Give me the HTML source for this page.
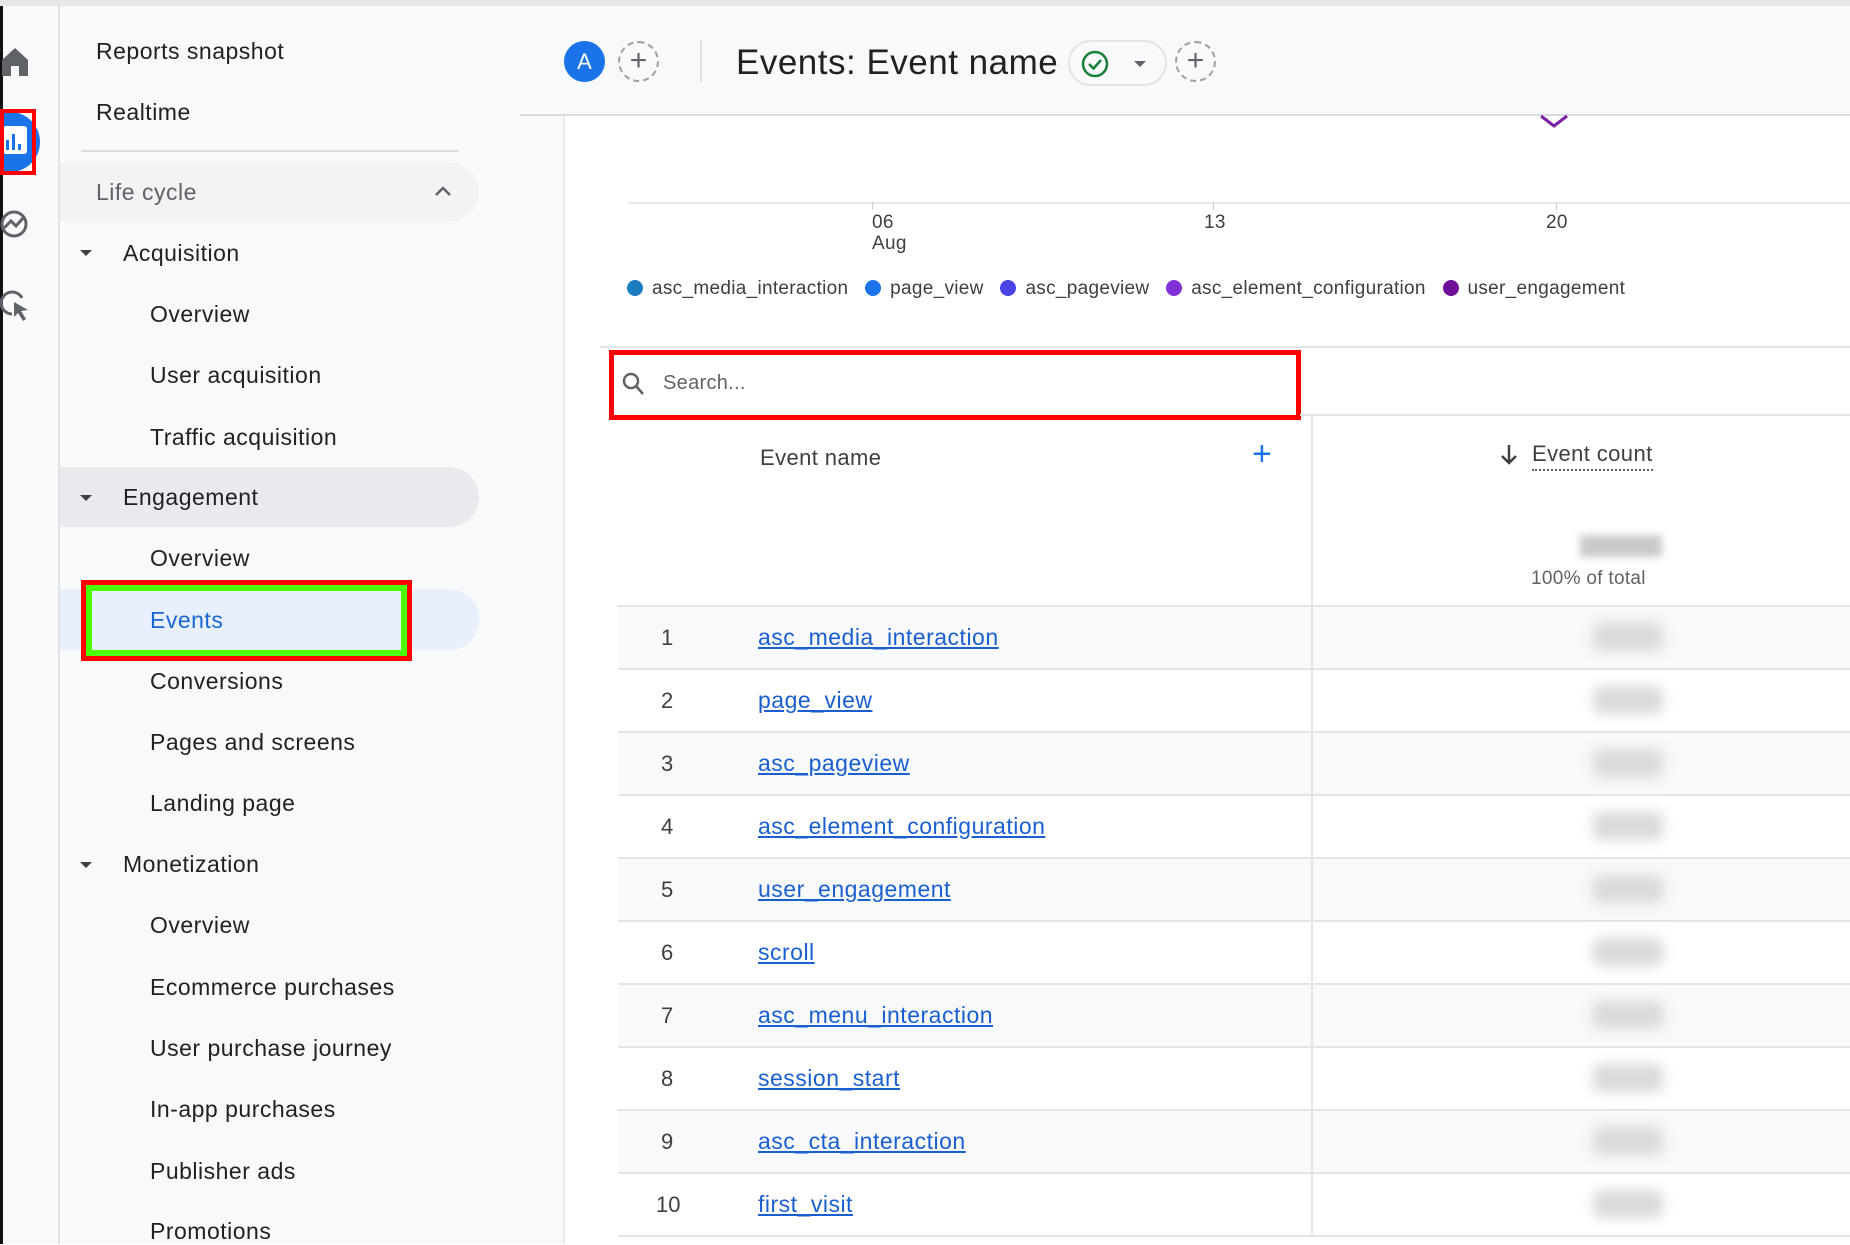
<!DOCTYPE html><html><head><style>
*{margin:0;padding:0;box-sizing:border-box}
body{width:1850px;height:1244px;overflow:hidden;background:#fff;font-family:"Liberation Sans",sans-serif;position:relative;color:#202124}
.a{position:absolute;white-space:nowrap}
.side{position:absolute;left:0;top:0;width:565px;height:1244px;background:#f8f9fa}
.nav{font-size:23px;color:#202124;line-height:28px;letter-spacing:0.5px}
.tri{position:absolute;width:0;height:0;border-left:6px solid transparent;border-right:6px solid transparent;border-top:6px solid #3c4043}
.row{position:absolute;left:618px;width:1232px;height:63px;border-bottom:2px solid #e3e4e6}
.num{position:absolute;left:43px;top:18px;font-size:22px;color:#3c4043}
.lnk{position:absolute;left:140px;top:17px;font-size:23px;color:#1a5fd0;text-decoration:underline;letter-spacing:0.5px}
.blur{position:absolute;left:975px;top:16px;width:70px;height:28px;background:#d9dadc;filter:blur(6px);border-radius:6px}
.leg{font-size:19px;color:#3c4043;letter-spacing:0.3px}
.dot{display:inline-block;width:16px;height:16px;border-radius:50%;vertical-align:-2px;margin-right:9px}
</style></head><body>
<div class="a" style="left:0;top:0;width:3px;height:1244px;background:#111"></div>
<div class="a" style="left:3px;top:0;width:57px;height:1244px;background:#f8f9fa;border-right:2px solid #e1e3e6"></div>
<div class="side" style="left:60px;width:505px;border-right:2px solid #e8eaed"></div>
<div class="a" style="left:0;top:0;width:1850px;height:6px;background:#e6e7e9"></div>
<svg class="a" style="left:0;top:44px" width="30" height="34" viewBox="0 0 30 34"><path d="M2 16 L15 4 L28 16 V32 H19 V22 H11 V32 H2 Z" fill="#5f6368"/></svg>
<div class="a" style="left:0;top:112px;width:40px;height:60px;background:#1a73e8;border-radius:0 30px 30px 0"></div>
<div class="a" style="left:3px;top:126px;width:24px;height:28px;background:#fff;border-radius:3px"></div>
<div class="a" style="left:6px;top:140px;width:3px;height:10px;background:#1a73e8"></div>
<div class="a" style="left:12px;top:134px;width:3px;height:16px;background:#1a73e8"></div>
<div class="a" style="left:18px;top:144px;width:3px;height:6px;background:#1a73e8"></div>
<div class="a" style="left:0;top:109px;width:36px;height:66px;border:4px solid #f00"></div>
<svg class="a" style="left:0;top:206px" width="32" height="36" viewBox="0 0 32 36"><circle cx="14" cy="18" r="12" fill="none" stroke="#5f6368" stroke-width="3"/><path d="M4 22 L11 15 L16 20 L24 11" fill="none" stroke="#5f6368" stroke-width="3"/></svg>
<svg class="a" style="left:0;top:288px" width="32" height="36" viewBox="0 0 32 36"><path d="M22 10 A11 11 0 1 0 12 26" fill="none" stroke="#5f6368" stroke-width="3"/><path d="M14 14 L28 22 L21 23 L26 31 L23 33 L18 25 L14 29 Z" fill="#5f6368"/></svg>
<div class="a nav" style="left:96px;top:37px">Reports snapshot</div>
<div class="a nav" style="left:96px;top:98px">Realtime</div>
<div class="a" style="left:81px;top:150px;width:378px;height:2px;background:#dadce0"></div>
<div class="a" style="left:60px;top:163px;width:419px;height:58px;background:#f1f3f4;border-radius:0 29px 29px 0"></div>
<div class="a nav" style="left:96px;top:178px;color:#5f6368">Life cycle</div>
<svg class="a" style="left:433px;top:184px" width="20" height="14"><path d="M3 11 L10 4 L17 11" fill="none" stroke="#5f6368" stroke-width="2.5"/></svg>
<div class="tri" style="left:80px;top:250px"></div><div class="a nav" style="left:123px;top:239px">Acquisition</div>
<div class="a nav" style="left:150px;top:300px">Overview</div>
<div class="a nav" style="left:150px;top:361px">User acquisition</div>
<div class="a nav" style="left:150px;top:423px">Traffic acquisition</div>
<div class="a" style="left:60px;top:467px;width:419px;height:60px;background:#e8eaed;border-radius:0 30px 30px 0"></div>
<div class="tri" style="left:80px;top:495px"></div><div class="a nav" style="left:123px;top:483px">Engagement</div>
<div class="a nav" style="left:150px;top:544px">Overview</div>
<div class="a" style="left:60px;top:589px;width:419px;height:61px;background:#e8f0fe;border-radius:0 30px 30px 0"></div>
<div class="a" style="left:81px;top:580px;width:331px;height:81px;border:5px solid #f00"></div>
<div class="a" style="left:86px;top:585px;width:321px;height:71px;border:6px solid #4cff00"></div>
<div class="a nav" style="left:150px;top:606px;color:#1967d2">Events</div>
<div class="a nav" style="left:150px;top:667px">Conversions</div>
<div class="a nav" style="left:150px;top:728px">Pages and screens</div>
<div class="a nav" style="left:150px;top:789px">Landing page</div>
<div class="tri" style="left:80px;top:862px"></div><div class="a nav" style="left:123px;top:850px">Monetization</div>
<div class="a nav" style="left:150px;top:911px">Overview</div>
<div class="a nav" style="left:150px;top:973px">Ecommerce purchases</div>
<div class="a nav" style="left:150px;top:1034px">User purchase journey</div>
<div class="a nav" style="left:150px;top:1095px">In-app purchases</div>
<div class="a nav" style="left:150px;top:1157px">Publisher ads</div>
<div class="a nav" style="left:150px;top:1217px">Promotions</div>
<div class="a" style="left:520px;top:6px;width:1330px;height:110px;background:#f8f9fa;border-bottom:2px solid #dadce0"></div>
<div class="a" style="left:564px;top:41px;width:41px;height:41px;border-radius:50%;background:#1a73e8;color:#fff;font-size:22px;text-align:center;line-height:41px">A</div>
<div class="a" style="left:618px;top:41px;width:41px;height:41px;border-radius:50%;border:2px dashed #9aa0a6;color:#5f6368;font-size:30px;text-align:center;line-height:36px">+</div>
<div class="a" style="left:700px;top:40px;width:2px;height:42px;background:#e0e0e0"></div>
<div class="a" style="left:736px;top:43px;font-size:35px;color:#202124;letter-spacing:0.5px">Events: Event name</div>
<div class="a" style="left:1068px;top:40px;width:99px;height:46px;border:2px solid #e3e4e6;border-radius:23px"></div>
<svg class="a" style="left:1080px;top:49px" width="30" height="30"><circle cx="15" cy="15" r="12" fill="none" stroke="#188038" stroke-width="2.5"/><path d="M9 15 L13.5 19.5 L21 11" fill="none" stroke="#188038" stroke-width="2.5"/></svg>
<div class="tri" style="left:1134px;top:61px;border-top-color:#5f6368"></div>
<div class="a" style="left:1175px;top:41px;width:41px;height:41px;border-radius:50%;border:2px dashed #9aa0a6;color:#5f6368;font-size:30px;text-align:center;line-height:36px">+</div>
<svg class="a" style="left:1537px;top:114px" width="40" height="16"><path d="M4 2 L17 12 L30 2" fill="none" stroke="#7b1fa2" stroke-width="3"/></svg>
<div class="a" style="left:628px;top:202px;width:1222px;height:2px;background:#e8eaed"></div>
<div class="a" style="left:872px;top:202px;width:1px;height:8px;background:#ccc"></div>
<div class="a" style="left:1213px;top:202px;width:1px;height:8px;background:#ccc"></div>
<div class="a" style="left:1556px;top:202px;width:1px;height:8px;background:#ccc"></div>
<div class="a leg" style="left:872px;top:212px;line-height:21px">06<br>Aug</div>
<div class="a leg" style="left:1204px;top:212px">13</div>
<div class="a leg" style="left:1546px;top:212px">20</div>
<div class="a leg" style="left:627px;top:278px"><span class="dot" style="background:#1c7cc0"></span>asc_media_interaction&nbsp;&nbsp;&nbsp;<span class="dot" style="background:#1a73e8"></span>page_view&nbsp;&nbsp;&nbsp;<span class="dot" style="background:#4b44e6"></span>asc_pageview&nbsp;&nbsp;&nbsp;<span class="dot" style="background:#8130d8"></span>asc_element_configuration&nbsp;&nbsp;&nbsp;<span class="dot" style="background:#6f0d99"></span>user_engagement</div>
<div class="a" style="left:600px;top:346px;width:1250px;height:2px;background:#e3e4e6"></div>
<div class="a" style="left:609px;top:350px;width:692px;height:70px;border:5px solid #f00"></div>
<svg class="a" style="left:621px;top:371px" width="24" height="26"><circle cx="10" cy="10" r="7" fill="none" stroke="#5f6368" stroke-width="2.5"/><path d="M15 15 L22 23" stroke="#5f6368" stroke-width="2.5"/></svg>
<div class="a" style="left:663px;top:372px;font-size:20px;color:#5f6368;letter-spacing:0.3px">Search...</div>
<div class="a" style="left:1300px;top:414px;width:550px;height:2px;background:#e3e4e6"></div>
<div class="a" style="left:760px;top:445px;font-size:22px;color:#3c4043;letter-spacing:0.4px">Event name</div>
<div class="a" style="left:1252px;top:437px;font-size:34px;color:#1a73e8;line-height:34px">+</div>
<div class="a" style="left:1311px;top:415px;width:2px;height:822px;background:#e3e4e6;z-index:2"></div>
<svg class="a" style="left:1499px;top:443px" width="20" height="24"><path d="M10 2 V20 M3 13 L10 20 L17 13" fill="none" stroke="#3c4043" stroke-width="2.5"/></svg>
<div class="a" style="left:1532px;top:441px;font-size:22px;color:#3c4043;border-bottom:2px dotted #5f6368;padding-bottom:2px;letter-spacing:0.4px">Event count</div>
<div class="a" style="left:1580px;top:535px;width:82px;height:22px;background:#c9cacc;filter:blur(4px)"></div>
<div class="a" style="left:1531px;top:568px;font-size:19px;color:#5f6368;letter-spacing:0.3px">100% of total</div>
<div class="a" style="left:618px;top:605px;width:1232px;height:2px;background:#e3e4e6"></div>
<div class="row" style="top:607px;background:#f8f9fa"><span class="num">1</span><span class="lnk">asc_media_interaction</span><span class="blur"></span></div>
<div class="row" style="top:670px"><span class="num">2</span><span class="lnk">page_view</span><span class="blur"></span></div>
<div class="row" style="top:733px;background:#f8f9fa"><span class="num">3</span><span class="lnk">asc_pageview</span><span class="blur"></span></div>
<div class="row" style="top:796px"><span class="num">4</span><span class="lnk">asc_element_configuration</span><span class="blur"></span></div>
<div class="row" style="top:859px;background:#f8f9fa"><span class="num">5</span><span class="lnk">user_engagement</span><span class="blur"></span></div>
<div class="row" style="top:922px"><span class="num">6</span><span class="lnk">scroll</span><span class="blur"></span></div>
<div class="row" style="top:985px;background:#f8f9fa"><span class="num">7</span><span class="lnk">asc_menu_interaction</span><span class="blur"></span></div>
<div class="row" style="top:1048px"><span class="num">8</span><span class="lnk">session_start</span><span class="blur"></span></div>
<div class="row" style="top:1111px;background:#f8f9fa"><span class="num">9</span><span class="lnk">asc_cta_interaction</span><span class="blur"></span></div>
<div class="row" style="top:1174px"><span class="num" style="left:38px">10</span><span class="lnk">first_visit</span><span class="blur"></span></div>
</body></html>
